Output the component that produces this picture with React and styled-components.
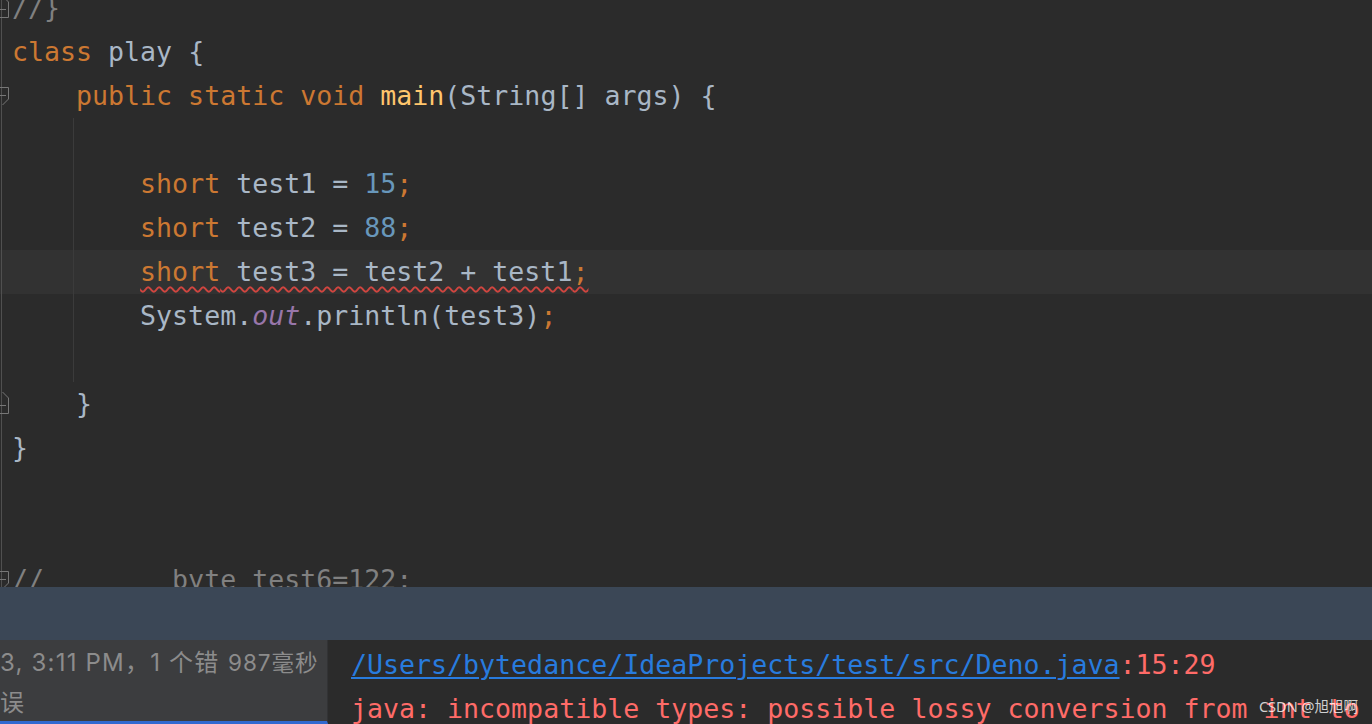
import styled, { createGlobalStyle, css } from "styled-components";

const GlobalStyle = createGlobalStyle`
  html, body {
    margin: 0;
    padding: 0;
    background: #2b2b2b;
    overflow: hidden;
  }
`;

const Window = styled.div`
  position: relative;
  display: flex;
  flex-direction: column;
  width: 1372px;
  height: 724px;
  overflow: hidden;
  background: #2b2b2b;
`;

const Editor = styled.div`
  flex: none;
  height: 587px;
  overflow: hidden;
  background: #2b2b2b;
`;

const CodeArea = styled.div`
  margin-top: -14px;
`;

const Line = styled.div`
  display: flex;
  height: 44px;
  line-height: 44px;
  background-color: ${(p) => (p.$current ? "#323232" : "transparent")};
  ${(p) =>
    p.$guide &&
    css`
      background-image: linear-gradient(#3b3b3b, #3b3b3b);
      background-size: 1px 100%;
      background-position: 73px 0;
      background-repeat: no-repeat;
    `}
`;

const Gutter = styled.div`
  flex: none;
  width: 12px;
  height: 44px;
  background: linear-gradient(#505050, #505050) 1px 0 / 1px 100% no-repeat;

  svg {
    display: block;
  }
`;

const Code = styled.div`
  white-space: pre;
  color: #a9b7c6;
  font-family: "DejaVu Sans Mono", "Liberation Mono", monospace;
  font-size: 26.6px;
`;

const Kw = styled.span`
  color: #cc7832;
`;

const Num = styled.span`
  color: #6897bb;
`;

const Fn = styled.span`
  color: #ffc66d;
`;

const Field = styled.span`
  color: #9876aa;
  font-style: italic;
`;

const Comment = styled.span`
  color: #808080;
`;

const ErrorText = styled.span`
  text-decoration: underline wavy #d0453f;
  text-decoration-thickness: 1.5px;
  text-underline-offset: 5px;
`;

const ToolHeader = styled.div`
  flex: none;
  height: 53px;
  background: #3b4756;
`;

const RunPanel = styled.div`
  flex: 1;
  display: flex;
  min-height: 0;
`;

const Tree = styled.div`
  position: relative;
  flex: none;
  width: 328px;
  box-sizing: border-box;
  padding-top: 3px;
  background: #3c3d3f;
  border-bottom: 3px solid #3169d0;
  border-right: 1px solid #323335;
  color: #8c8c8c;
  font-family: Inter, "Noto Sans CJK SC", sans-serif;
  font-size: 24px;
  letter-spacing: 1.2px;
  line-height: 40px;
  overflow: hidden;
`;

const TreeLine = styled.div`
  white-space: nowrap;
`;

const Duration = styled.span`
  position: absolute;
  top: 3px;
  left: 222px;
  padding-left: 6px;
  width: 106px;
  background: #3c3d3f;
  font-size: 22.5px;
  letter-spacing: 1px;
`;

const Console = styled.div`
  flex: 1;
  min-width: 0;
  padding: 3px 0 0 23px;
  background: #2b2b2b;
  color: #ff6b68;
  font-family: "DejaVu Sans Mono", "Liberation Mono", monospace;
  font-size: 26.6px;
  line-height: 44px;
  overflow: hidden;
`;

const ConsoleLine = styled.div`
  white-space: pre;
`;

const Link = styled.span`
  color: #287bde;
  text-decoration: underline;
  text-decoration-thickness: 2px;
  text-underline-offset: 3px;
`;

const Watermark = styled.div`
  position: absolute;
  right: 14px;
  bottom: 8px;
  color: rgba(255, 255, 255, 0.78);
  font-family: "Noto Sans", "Noto Sans CJK SC", sans-serif;
  font-size: 14.5px;
`;

function FoldStart() {
  return (
    <svg width="12" height="44" viewBox="0 0 12 44">
      <path d="M0 13.5 H8.5 V25 L2.5 31" fill="none" stroke="#777777" strokeWidth="1" />
      <path d="M0 21.5 H6" stroke="#777777" strokeWidth="1" />
    </svg>
  );
}

function FoldEnd() {
  return (
    <svg width="12" height="44" viewBox="0 0 12 44">
      <path d="M2.5 10 L8.5 16 V31.5 H0" fill="none" stroke="#777777" strokeWidth="1" />
      <path d="M0 23.5 H6" stroke="#777777" strokeWidth="1" />
    </svg>
  );
}

function App() {
  return (
    <Window>
      <GlobalStyle />
      <Editor>
        <CodeArea>
          <Line>
            <Gutter><FoldEnd /></Gutter>
            <Code><Comment>{"//}"}</Comment></Code>
          </Line>
          <Line>
            <Gutter />
            <Code><Kw>class</Kw>{" play {"}</Code>
          </Line>
          <Line>
            <Gutter><FoldStart /></Gutter>
            <Code>
              {"    "}<Kw>public static void</Kw> <Fn>main</Fn>{"(String[] args) {"}
            </Code>
          </Line>
          <Line $guide>
            <Gutter />
            <Code> </Code>
          </Line>
          <Line $guide>
            <Gutter />
            <Code>
              {"        "}<Kw>short</Kw>{" test1 = "}<Num>15</Num><Kw>;</Kw>
            </Code>
          </Line>
          <Line $guide>
            <Gutter />
            <Code>
              {"        "}<Kw>short</Kw>{" test2 = "}<Num>88</Num><Kw>;</Kw>
            </Code>
          </Line>
          <Line $guide $current>
            <Gutter />
            <Code>
              {"        "}
              <ErrorText><Kw>short</Kw>{" test3 = test2 + test1"}<Kw>;</Kw></ErrorText>
            </Code>
          </Line>
          <Line $guide>
            <Gutter />
            <Code>
              {"        System."}<Field>out</Field>{".println(test3)"}<Kw>;</Kw>
            </Code>
          </Line>
          <Line $guide>
            <Gutter />
            <Code> </Code>
          </Line>
          <Line>
            <Gutter><FoldEnd /></Gutter>
            <Code>{"    }"}</Code>
          </Line>
          <Line>
            <Gutter />
            <Code>{"}"}</Code>
          </Line>
          <Line>
            <Gutter />
            <Code> </Code>
          </Line>
          <Line>
            <Gutter />
            <Code> </Code>
          </Line>
          <Line>
            <Gutter><FoldStart /></Gutter>
            <Code><Comment>{"//        byte test6=122;"}</Comment></Code>
          </Line>
        </CodeArea>
      </Editor>
      <ToolHeader />
      <RunPanel>
        <Tree>
          <TreeLine>3, 3:11 PM，1 个错</TreeLine>
          <TreeLine>误</TreeLine>
          <Duration>987毫秒</Duration>
        </Tree>
        <Console>
          <ConsoleLine>
            <Link>/Users/bytedance/IdeaProjects/test/src/Deno.java</Link>:15:29
          </ConsoleLine>
          <ConsoleLine>java: incompatible types: possible lossy conversion from int to short</ConsoleLine>
        </Console>
      </RunPanel>
      <Watermark>CSDN @旭旭啊</Watermark>
    </Window>
  );
}

export default App;
